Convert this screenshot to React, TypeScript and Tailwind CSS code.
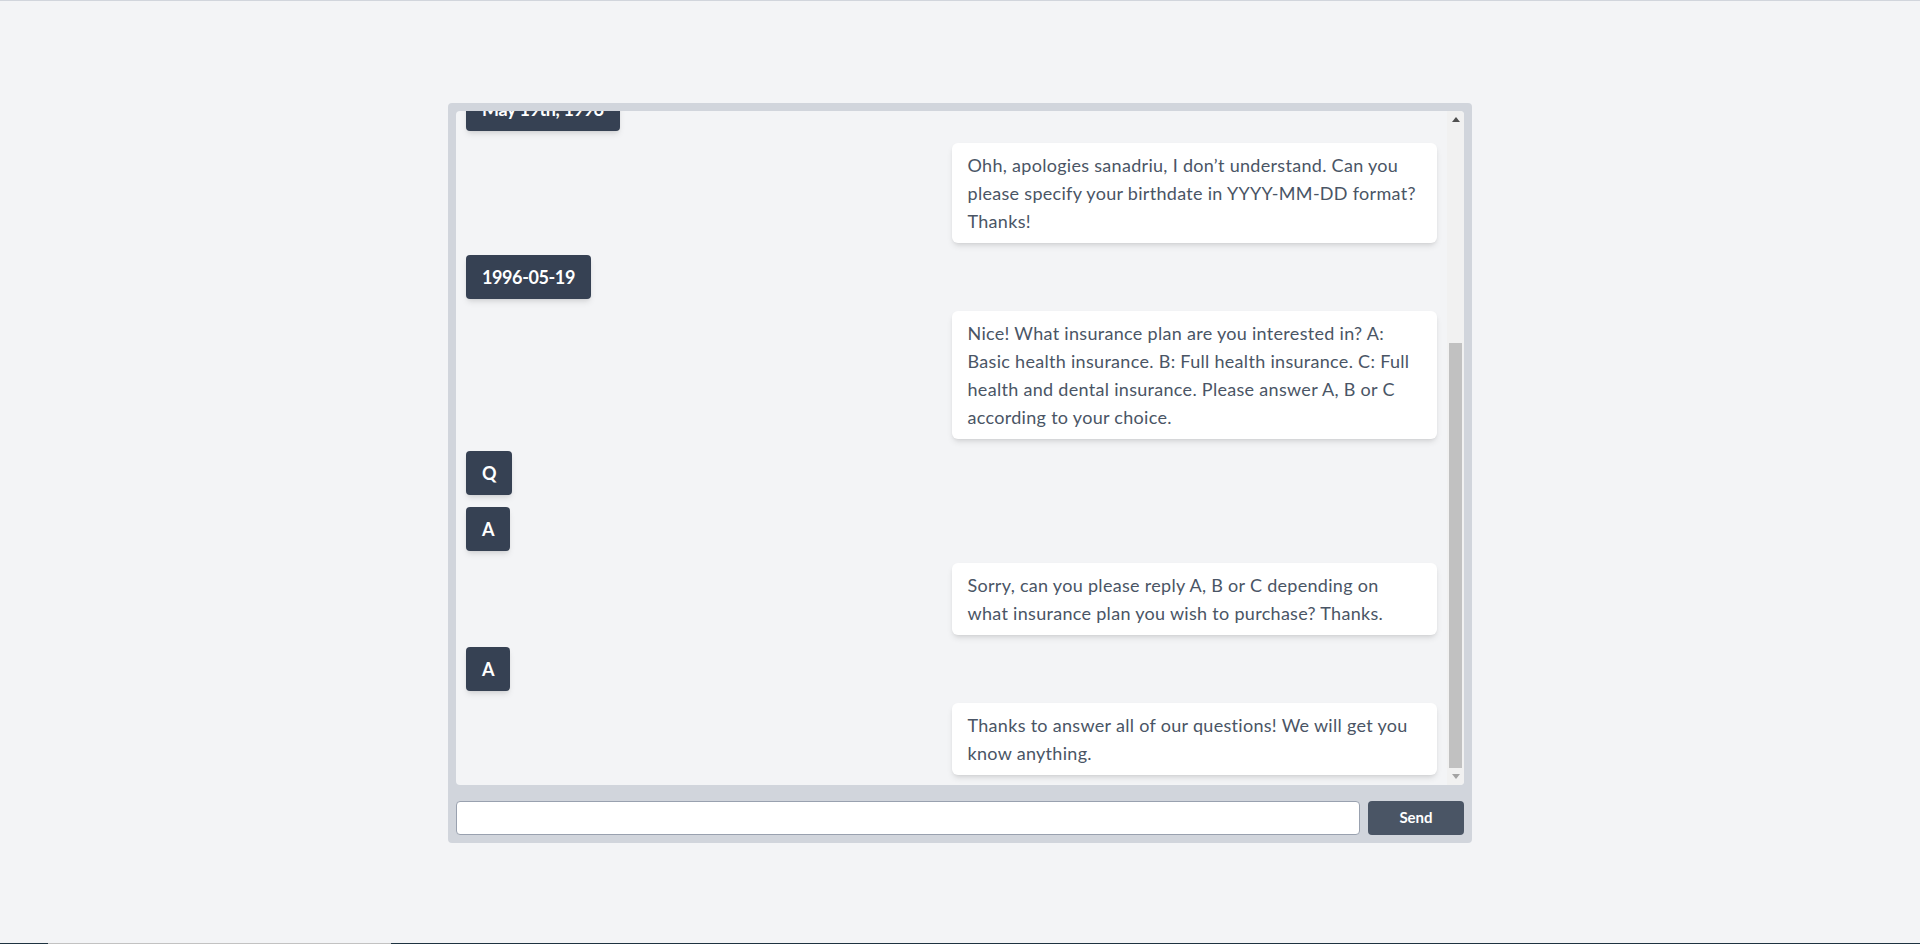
import React, { useLayoutEffect, useRef } from "react";

type Msg = { from: "user" | "bot"; text: string };

const messages: Msg[] = [
  { from: "bot", text: "Hello! Welcome to our insurance service. Before we start, we need some information about you. What is your name?" },
  { from: "user", text: "sanadriu" },
  { from: "bot", text: "Nice to meet you, sanadriu! Could you please tell me your birthdate?" },
  { from: "user", text: "May 19th, 1996" },
  { from: "bot", text: "Ohh, apologies sanadriu, I don\u2019t understand. Can you please specify your birthdate in YYYY-MM-DD format? Thanks!" },
  { from: "user", text: "1996-05-19" },
  { from: "bot", text: "Nice! What insurance plan are you interested in? A: Basic health insurance. B: Full health insurance. C: Full health and dental insurance. Please answer A, B or C according to your choice." },
  { from: "user", text: "Q" },
  { from: "user", text: "A" },
  { from: "bot", text: "Sorry, can you please reply A, B or C depending on what insurance plan you wish to purchase? Thanks." },
  { from: "user", text: "A" },
  { from: "bot", text: "Thanks to answer all of our questions! We will get you know anything." },
];

export default function App() {
  const ref = useRef<HTMLDivElement>(null);
  useLayoutEffect(() => {
    if (ref.current) ref.current.scrollTop = ref.current.scrollHeight;
  }, []);

  return (
    <div
      className="relative h-screen bg-gray-100 border-t border-gray-300 flex items-center justify-center"
      style={{ fontFamily: "Lato, 'Noto Sans', sans-serif" }}
    >
      <div className="w-[1024px] h-[740px] bg-gray-300 rounded p-2 flex flex-col gap-4">
        <div className="flex-1 min-h-0 flex bg-gray-100 rounded overflow-hidden">
          <div
            ref={ref}
            className="flex-1 min-w-0 overflow-hidden p-2.5 flex flex-col gap-3"
          >
            {messages.map((m, i) =>
              m.from === "user" ? (
                <div
                  key={i}
                  className="shrink-0 self-start bg-gray-700 text-white font-bold text-lg leading-7 tracking-[-0.4px] px-4 py-2 rounded shadow-md"
                >
                  {m.text}
                </div>
              ) : (
                <div
                  key={i}
                  className="shrink-0 self-end w-1/2 bg-white text-gray-600 text-lg leading-7 tracking-[0.3px] px-4 py-2 rounded-md shadow-md"
                >
                  {m.text}
                </div>
              )
            )}
          </div>
          <div className="w-[17px] shrink-0 bg-[#f1f1f1] flex flex-col">
            <div className="h-[17px] flex items-center justify-center">
              <svg width="8" height="5" viewBox="0 0 8 5">
                <polygon points="4,0 8,5 0,5" fill="#505050" />
              </svg>
            </div>
            <div className="flex-1 flex flex-col justify-end px-[2px]">
              <div className="h-[425px] bg-[#c1c1c1]" />
            </div>
            <div className="h-[17px] flex items-center justify-center">
              <svg width="8" height="5" viewBox="0 0 8 5">
                <polygon points="0,0 8,0 4,5" fill="#a3a3a3" />
              </svg>
            </div>
          </div>
        </div>
        <div className="flex gap-2 h-[34px] shrink-0">
          <input
            type="text"
            className="flex-1 bg-white border border-gray-400 rounded px-2 outline-none"
          />
          <button className="w-24 bg-gray-600 text-white font-bold text-[15px] rounded">
            Send
          </button>
        </div>
      </div>
      <div className="fixed bottom-0 left-0 right-0 h-px flex">
        <div className="w-[48px] bg-[#1e3340]" />
        <div className="w-[343px] bg-[#c2c2c2]" />
        <div className="flex-1 bg-[#1e3340]" />
      </div>
    </div>
  );
}
